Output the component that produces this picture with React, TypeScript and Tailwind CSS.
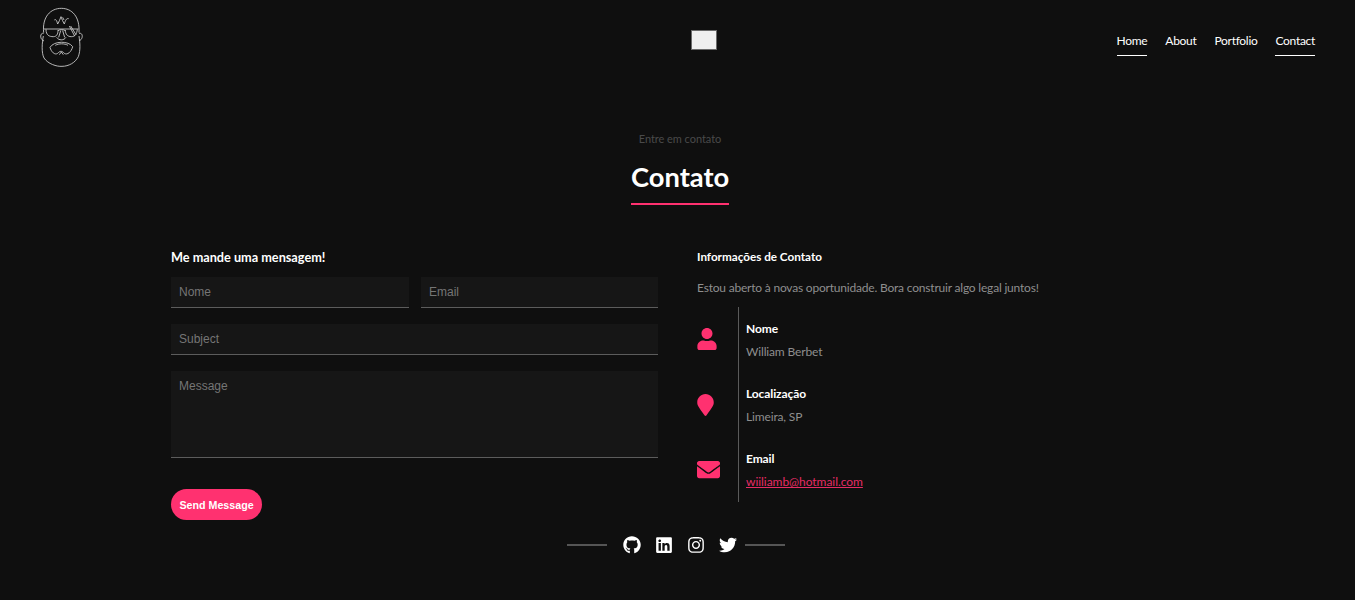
import { FaUser, FaMapMarker, FaEnvelope, FaGithub, FaLinkedin, FaInstagram, FaTwitter } from "react-icons/fa";

const font = "font-['Lato','Open_Sans',sans-serif]";

function Logo() {
  return (
    <svg viewBox="0 0 270 240" className="w-[90px] h-[80px] ml-[20px] shrink-0" fill="none" stroke="#cfcfcf" strokeWidth="2.6">
      <path d="M71 98 C66 50 92 25 124 25 C156 25 180 50 177 98" />
      <path d="M103 60 C108 56 110 62 113 72 C117 66 120 58 123 50 C126 58 129 66 133 72 C136 62 139 54 146 56 M128 52 L132 60" />
      <path d="M72 87 L176 87 M78 88 C78 106 88 110 100 110 C110 110 114 102 114 90 M136 90 C136 102 142 110 154 110 C166 110 170 102 172 88 M114 92 C120 88 130 88 136 92" />
      <path d="M148 78 L164 108 M152 78 L168 104" />
      <path d="M71 100 C60 97 58 118 72 123 M177 100 C190 97 190 118 177 123" />
      <path d="M70 108 C66 130 64 158 72 174 C84 192 110 200 126 199 C146 199 166 188 175 170 C182 150 180 130 177 108" />
      <path d="M90 142 C102 122 146 122 158 140 C154 156 142 166 133 160 C126 152 120 152 113 160 C104 166 94 156 90 142 Z" />
      <path d="M106 136 C116 130 134 130 144 136" />
      <path d="M110 112 C116 122 132 122 138 112 M122 92 L116 112 M128 92 L134 112" />
      <path d="M118 164 L124 156 L130 164" />
    </svg>
  );
}

function Info({ icon, title, children }: { icon: React.ReactNode; title: string; children: React.ReactNode }) {
  return (
    <div className="flex h-[65px]">
      <div className="w-[41px] shrink-0 flex items-center text-[#ff3170]">{icon}</div>
      <div className="border-l border-[#5a5a5a] pl-[7px] flex-1 flex flex-col pt-[14px]">
        <h4 className="text-[12px] tracking-[-0.1px] font-bold text-white leading-[16px]">{title}</h4>
        <p className="text-[12px] tracking-[-0.15px] text-[#8e8e8e] leading-[16px] mt-[7px]">{children}</p>
      </div>
    </div>
  );
}

const inputCls =
  "w-full h-[31px] bg-[#161616] border-b border-[#5c5c5c] px-[8px] text-[12px] font-['Liberation_Sans',Arial,sans-serif] placeholder:text-[#757575] outline-none";

export default function App() {
  return (
    <div className={`min-h-[600px] bg-[#0f0f0f] text-white ${font}`}>
      <header className="h-[80px] flex items-center pr-[40px]">
        <Logo />
        <div className="ml-[581px]">
          <button className="block w-[26px] h-[20px] bg-[#efefef] border border-[#6a6a6a]" aria-label="menu" />
        </div>
        <nav className="ml-auto flex gap-[18px] text-[12px] tracking-[-0.3px] text-white">
          <a className="border-b border-white pb-[6px] pt-[9px] leading-[16px]">Home</a>
          <a className="pb-[7px] pt-[9px] leading-[16px]">About</a>
          <a className="pb-[7px] pt-[9px] leading-[16px]">Portfolio</a>
          <a className="border-b border-white pb-[6px] pt-[9px] leading-[16px]">Contact</a>
        </nav>
      </header>

      <section className="flex flex-col items-center pt-[51px] pl-[5px]">
        <p className="text-[11px] tracking-[-0.05px] leading-[16px] text-[#4a4a4a]">Entre em contato</p>
        <div className="mt-[9px]">
          <h2 className="text-[27.3px] font-bold leading-[42px] w-[98px] text-center border-b-2 border-[#ff3170] h-[49px] whitespace-nowrap">Contato</h2>
        </div>
      </section>

      <main className="w-[1013px] mx-auto mt-[44px] grid grid-cols-[487px_487px] gap-x-[39px]">
        <div>
          <h3 className="text-[12.7px] font-bold leading-[16px]">Me mande uma mensagem!</h3>
          <div className="mt-[12px] grid grid-cols-[238px_237px] gap-x-[12px]">
            <input className={inputCls} placeholder="Nome" />
            <input className={inputCls} placeholder="Email" />
          </div>
          <input className={`${inputCls} mt-[16px]`} placeholder="Subject" />
          <textarea
            className={`${inputCls} mt-[16px] !h-[87px] block pt-[6px] resize-none`}
            placeholder="Message"
          />
          <button className="mt-[31px] block w-[91px] h-[31px] rounded-full bg-[#ff3170] text-white text-[10.7px] pt-[1px] font-bold font-['Liberation_Sans',Arial,sans-serif]">
            Send Message
          </button>
        </div>
        <div>
          <h3 className="text-[11.7px] font-bold leading-[15px]">Informações de Contato</h3>
          <p className="text-[12px] tracking-[-0.2px] text-[#8e8e8e] leading-[16px] mt-[16px]">
            Estou aberto à novas oportunidade. Bora construir algo legal juntos!
          </p>
          <div className="mt-[11px]">
            <Info icon={<FaUser className="w-[20px] h-[22px] -mt-[2px]" />} title="Nome">William Berbet</Info>
            <Info icon={<FaMapMarker className="w-[17px] h-[22px]" />} title="Localização">Limeira, SP</Info>
            <Info icon={<FaEnvelope className="w-[23px] h-[23px]" />} title="Email">
              <a className="underline tracking-[-0.05px] text-[#e62c65]">wiiliamb@hotmail.com</a>
            </Info>
          </div>
        </div>
      </main>

      <footer className="flex items-center mt-[10px] h-[30px] ml-[567px]">
        <div className="w-[40px] h-[2px] bg-[#555555]" />
        <div className="flex items-center ml-[16px] gap-[14px] text-white">
          <FaGithub size={18} className="w-[18px]" />
          <FaLinkedin size={18} />
          <FaInstagram size={18} />
          <FaTwitter size={18} />
        </div>
        <div className="w-[40px] h-[2px] bg-[#555555] ml-[8px]" />
      </footer>
    </div>
  );
}
